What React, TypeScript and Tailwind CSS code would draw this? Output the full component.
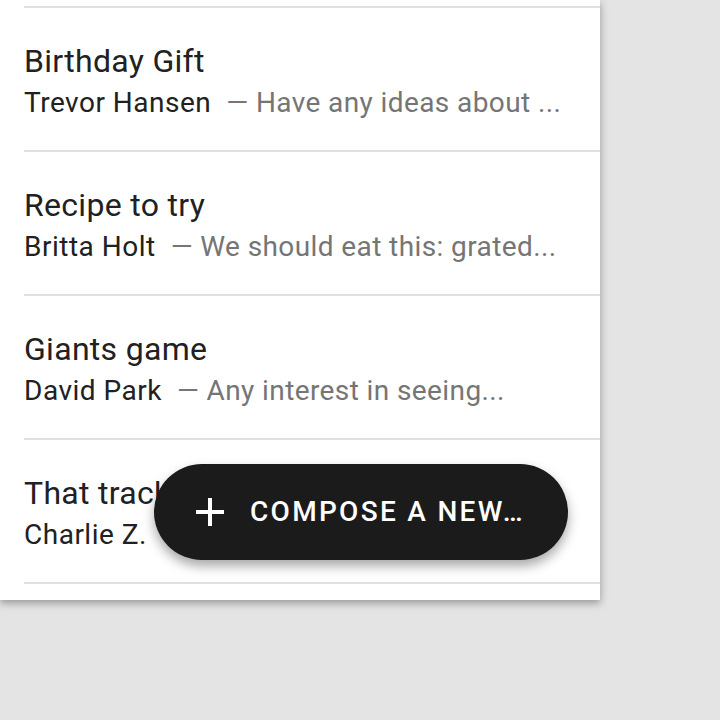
import React from 'react';

type Message = {
  subject: string;
  sender: string;
  preview: string;
};

const messages: Message[] = [
  { subject: 'Birthday Gift', sender: 'Trevor Hansen', preview: 'Have any ideas about ...' },
  { subject: 'Recipe to try', sender: 'Britta Holt', preview: 'We should eat this: grated...' },
  { subject: 'Giants game', sender: 'David Park', preview: 'Any interest in seeing...' },
  { subject: 'That track', sender: 'Charlie Z.', preview: 'Wow, this...' },
];

const MessageRow: React.FC<{ message: Message }> = ({ message }) => (
  <div className="ml-6 border-t-2 border-[#e0e0e0]">
    <div className="h-[142px] pt-[33px] whitespace-nowrap">
      <div className="text-[32px] leading-[40px] tracking-[0.3px] text-[#212121]">{message.subject}</div>
      <div className="mt-[2px] text-[28px] leading-[40px] tracking-[0.5px] text-[#212121]">
        {message.sender}
        <span className="ml-[15px] tracking-[0.4px] text-[#757575]">— {message.preview}</span>
      </div>
    </div>
  </div>
);

export default function App() {
  return (
    <div
      className="w-[720px] h-[720px] bg-[#e4e4e4] overflow-hidden"
      style={{ fontFamily: 'Roboto, "Noto Sans", sans-serif' }}
    >
      <div className="relative w-[600px] h-[600px] bg-white overflow-hidden shadow-[0_3px_8px_rgba(0,0,0,0.35)]">
        <div className="h-[6px]" />
        {messages.map((m) => (
          <MessageRow key={m.subject} message={m} />
        ))}
        <div className="ml-6 border-t-2 border-[#e0e0e0]" />

        <button className="absolute left-[154px] top-[464px] w-[414px] h-[96px] rounded-full bg-[#1b1b1b] text-white flex items-center pl-[32px] shadow-[0_6px_12px_rgba(0,0,0,0.35)]">
          <svg viewBox="0 0 24 24" className="w-12 h-12" fill="currentColor">
            <path d="M19 13h-6v6h-2v-6H5v-2h6V5h2v6h6v2z" />
          </svg>
          <span className="ml-[16px] text-[28px] font-medium uppercase tracking-[0.082em] leading-none">
            Compose a new…
          </span>
        </button>
      </div>
    </div>
  );
}
